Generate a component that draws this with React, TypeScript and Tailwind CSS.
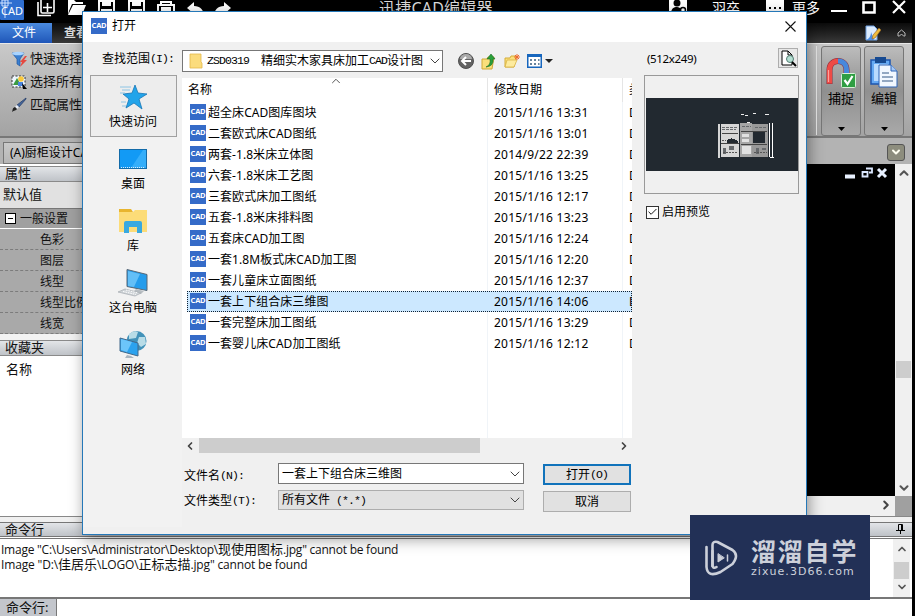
import type { ReactNode } from 'react'
import { Check, ChevronDown, ChevronLeft, ChevronRight, ChevronUp } from 'lucide-react'

const files = [
  ['超全床CAD图库图块', '2015/1/16 13:31'],
  ['二套欧式床CAD图纸', '2015/1/16 13:01'],
  ['两套-1.8米床立体图', '2014/9/22 22:39'],
  ['六套-1.8米床工艺图', '2015/1/16 13:25'],
  ['三套欧式床加工图纸', '2015/1/16 12:17'],
  ['五套-1.8米床排料图', '2015/1/16 13:23'],
  ['五套床CAD加工图', '2015/1/16 12:24'],
  ['一套1.8M板式床CAD加工图', '2015/1/16 12:20'],
  ['一套儿童床立面图纸', '2015/1/16 12:37'],
  ['一套上下组合床三维图', '2015/1/16 14:06'],
  ['一套完整床加工图纸', '2015/1/16 13:29'],
  ['一套婴儿床CAD加工图纸', '2015/1/16 12:12'],
]

const properties = ['色彩', '图层', '线型', '线型比例', '线宽']

const Mono = ({ children }: { children: ReactNode }) => (
  <span className="whitespace-pre font-['Liberation_Mono'] text-[11.5px] tracking-[-0.9px]">
    {children}
  </span>
)

const CadBadge = () => (
  <span className="flex size-4 shrink-0 items-center justify-center bg-[#356bc8] font-['Open_Sans'] text-[7.5px] leading-none font-bold tracking-[-0.2px] text-white">
    CAD
  </span>
)

const SaveIcon = () => (
  <svg width="17" height="20" viewBox="0 0 17 20" fill="none" stroke="#fff" strokeWidth="2">
    <path d="M1 1h15v16H1z" />
    <path d="M5 1v4h7V1M4 17v-7h9v7" />
    <path d="M6 3h5" />
  </svg>
)

const TitleBar = () => (
  <div className="flex h-[23px] shrink-0 items-start overflow-hidden bg-black text-white">
    <svg width="24" height="20" viewBox="0 0 24 20">
      <rect width="24" height="20" rx="1" fill="#2f6fd0" />
      <path d="M5 0v18M0 3h12M2 0h6v6H2z" stroke="#cfe2ff" fill="none" />
      <text x="1" y="15" fontSize="11" fill="#fff" fontFamily="Noto Sans" textLength="22">
        CAD
      </text>
    </svg>
    <svg className="ml-[13px]" width="18" height="17" viewBox="0 0 18 17" fill="none" stroke="#fff">
      <rect x="4" y="-2" width="13" height="15" rx="1.500" fill="#000" strokeWidth="1.600" />
      <path d="M1 2v13.500h13" strokeWidth="1.600" />
      <path d="M10.500 3v9M6 7.500h9" strokeWidth="1.600" />
    </svg>
    <svg className="ml-[12px]" width="19" height="17" viewBox="0 0 19 17">
      <path d="M1 15V0h6l2 2h7v2H5L2 11z" fill="#fff" />
      <path d="M6 5h13l-4 10H1z" fill="#fff" />
    </svg>
    <div className="ml-[12px] flex">
      <SaveIcon />
    </div>
    <div className="ml-[13px] flex">
      <SaveIcon />
    </div>
    <svg className="ml-[12px]" width="18" height="17" viewBox="0 0 18 17" fill="none" stroke="#fff" strokeWidth="2">
      <path d="M4 5V2h10v3M1 14V5h16v9" />
      <path d="M5 15V8h8v7M6 10h6" />
    </svg>
    <svg className="ml-[12px]" width="17" height="17" viewBox="0 0 17 17" fill="#fff">
      <path d="M0 8l7-6v4c6 0 10 4 10 10-2-4-5-5-10-5v3z" />
    </svg>
    <svg className="ml-[10px]" width="17" height="17" viewBox="0 0 17 17" fill="#fff">
      <path d="M17 8l-7-6v4C4 6 0 10 0 16c2-4 5-5 10-5v3z" />
    </svg>
    <span className="mt-[-1px] ml-[148px] w-[115px] text-[16px] leading-[18px] tracking-[0.2px] whitespace-nowrap text-[#ddd]">
      迅捷CAD编辑器
    </span>
    <svg className="ml-[175px]" width="18" height="15" viewBox="0 0 18 15">
      <rect width="18" height="15" fill="#fff" />
      <circle cx="8" cy="3" r="3.5" />
      <path d="M2 14c0-6 3-7 6-7 2 0 3 1 4 2l-1 5z" />
      <circle cx="14" cy="10" r="2.5" fill="#fff" stroke="#000" strokeWidth="1.5" />
    </svg>
    <span className="ml-[25px] text-[14px] leading-[16px]">羽卒</span>
    <svg className="ml-[26px]" width="18" height="15" viewBox="0 0 18 15">
      <rect width="18" height="15" fill="#fff" />
      <path d="M3 7h2v2H3zM8 7h2v2H8zM13 7h2v2h-2z" />
    </svg>
    <span className="ml-[8px] text-[14px] leading-[16px]">更多</span>
    <svg className="ml-[11px]" width="76" height="16" viewBox="0 0 76 16" fill="none" stroke="#fff">
      <path d="M0 11h16" strokeWidth="2" />
      <path d="M32.5 2.5h11v10h-11z" strokeWidth="2.600" />
      <path d="M62 1l12 12M74 1L62 13" strokeWidth="2.2" />
    </svg>
  </div>
)

const MenuTabs = () => (
  <div className="flex h-5 shrink-0 items-center justify-between bg-gradient-to-b from-[#0b0b0b] to-[#3a3a3a] pr-[6px]">
    <div className="flex h-full items-center text-[12px] leading-none text-white">
      <div className="flex h-full w-[52px] items-center justify-center bg-gradient-to-b from-[#4b8be0] to-[#1f56b8] pr-1">
        文件
      </div>
      <span className="ml-[12px] font-bold text-[#ddd]">查看</span>
    </div>
    <div className="flex items-center">
      <svg width="16" height="16" viewBox="0 0 16 16">
        <path d="M1 1h8l3 3v11H1z" fill="#dcecff" stroke="#6f9fe0" />
        <path d="M1 15c3-1 5-4 5-8l3 8z" fill="#4c8fe6" />
        <path d="M7 14l1-4 6-7 2 2-6 8z" fill="#f0bc3c" stroke="#8d5c21" strokeWidth=".6" />
      </svg>
      <svg className="ml-[16px]" width="9" height="8" viewBox="0 0 9 8" fill="none" stroke="#bbb">
        <path d="M1 4l3.500-3L8 4v3H6.500L4.500 5 2.500 7H1z" />
      </svg>
    </div>
  </div>
)

const RibbonButton = ({ label, children }: { label: string; children: ReactNode }) => (
  <div className="flex h-[90px] w-[40px] flex-col items-center rounded-[3px] border border-[#777] bg-gradient-to-b from-[#bcbcbc] via-[#909090] to-[#a9a9a9] pt-[9px]">
    <div className="h-[33px]">{children}</div>
    <span className="text-[13px] leading-[18px] text-black">{label}</span>
    <svg className="mt-[20px]" width="7" height="4" viewBox="0 0 7 4">
      <path d="M0 0h7L3.500 4z" />
    </svg>
  </div>
)

const Ribbon = () => (
  <div className="flex h-[93px] shrink-0 justify-between border-t border-[#e8e8e8] bg-gradient-to-b from-[#c9c9c9] to-[#a3a3a3] pr-2">
    <div className="flex flex-col pt-[3px] pl-[11px] text-[13px] text-[#111]">
      <div className="flex h-[23px] items-center gap-[3px]">
        <svg width="16" height="16" viewBox="0 0 16 16">
          <path d="M1 2h12L9 8v7l-3-2V8z" fill="#3a7fd0" stroke="#23589e" strokeWidth=".7" />
          <ellipse cx="7" cy="2.500" rx="6" ry="1.700" fill="#a9d4ff" />
          <path d="M14 5l-5 6h2l-2 5 7-7h-3l3-4z" fill="#e5483f" />
        </svg>
        快速选择
      </div>
      <div className="flex h-[23px] items-center gap-[3px]">
        <svg width="16" height="16" viewBox="0 0 16 16">
          <path d="M1 2h13v11H1z" fill="#eef6ff" stroke="#333" strokeDasharray="2 1.500" />
          <circle cx="10" cy="5" r="2.800" fill="#fac83c" />
          <path d="M2 11l4-7 4 7z" fill="#3b9a42" />
          <path d="M7 8h5v4H7z" fill="#4b85df" />
          <path d="M11 9l5 6h-4z" />
        </svg>
        选择所有
      </div>
      <div className="flex h-[23px] items-center gap-[3px]">
        <svg width="16" height="16" viewBox="0 0 16 16">
          <path d="M15 1L6 8l2 2 7-8z" fill="#44669c" stroke="#223a63" strokeWidth=".7" />
          <path d="M6 8l2 2-2 2-2-2z" fill="#e8eef8" />
          <path d="M4 10l2 2c-1 2-3 1-5 3 1-2 0-4 3-5z" fill="#222" />
        </svg>
        匹配属性
      </div>
    </div>
    <div className="flex gap-[3px] pt-[2px]">
      <div className="mr-[1px] h-[89px] w-px bg-[#e8e8e8]" />
      <RibbonButton label="捕捉">
        <svg width="32" height="33" viewBox="0 0 32 33" fill="none">
          <path d="M4.500 28V14c0-12 17-12 17 0v6" stroke="#8a2c3c" strokeWidth="6" />
          <path d="M4.500 27.500V14c0-6 4-9 8.500-9" stroke="#ee4a45" strokeWidth="5" />
          <path d="M13 5c5 0 8.500 3 8.500 9v5" stroke="#4888dc" strokeWidth="5" />
          <path d="M3.500 26V14" stroke="#ffa19c" strokeWidth="1.200" />
          <rect x="16.500" y="17.500" width="14" height="14" rx="1" fill="#2f9e43" stroke="#d7f0d8" />
          <path d="M19.500 24l3 4 5-8" stroke="#fff" strokeWidth="2.200" />
        </svg>
      </RibbonButton>
      <RibbonButton label="编辑">
        <svg width="30" height="33" viewBox="0 0 30 33">
          <path d="M2 4h19v24H2z" fill="#65a9f3" stroke="#1c55ae" strokeWidth="1.500" />
          <path d="M6 1h11v6H6z" fill="#174a91" />
          <path d="M5 8h14v17H5z" fill="#b9dafe" />
          <path d="M10 9h12l6 6v16H10z" fill="#f1f7ff" stroke="#2f65b6" />
          <path d="M22 9v6h6" fill="#a7c9f5" stroke="#2f65b6" />
          <path d="M13 17h7M13 21h11M13 25h11" stroke="#738dae" strokeWidth="1.700" />
        </svg>
      </RibbonButton>
    </div>
  </div>
)

const DocumentTabs = () => (
  <div className="flex h-[28px] shrink-0 items-center justify-between border-t-2 border-[#777] bg-[#b3b3b3] pr-[7px] pl-[3px]">
    <div className="mt-[4px] flex h-[22px] w-[170px] items-center border border-[#777] bg-gradient-to-b from-[#c9c9c9] to-[#b6b6b6] pl-[6px] text-[12px]">
      (A)厨柜设计CAD
    </div>
    <div className="mt-[2px] flex h-[17px] w-[18px] items-center justify-center rounded-[3px] border border-[#555] bg-[#8d8d7d]">
      <ChevronDown className="size-3 text-[#fffff0]" strokeWidth={4} />
    </div>
  </div>
)

const PanelTitle = ({ children }: { children: ReactNode }) => (
  <div className="flex h-4 items-center border-y border-[#8a8a8a] bg-gradient-to-b from-[#e3e5e8] to-[#bfc3c8] pb-px pl-[5px] text-[13px] leading-none">
    {children}
  </div>
)

const PropertiesPanel = () => (
  <div className="flex w-[200px] flex-col bg-white pt-[2px] text-[#111]">
    <PanelTitle>属性</PanelTitle>
    <div className="flex h-[26px] items-center bg-[#e1e1e1] pb-px pl-[3px] text-[13px]">默认值</div>
    <div className="flex h-[21px] items-center gap-[4px] border-t border-b border-t-[#777] border-b-white bg-[#a0a0a0] pl-[5px] text-[12px]">
      <span className="flex size-[11px] items-center justify-center border border-black bg-white">
        <span className="h-px w-[5px] bg-black" />
      </span>
      一般设置
    </div>
    {properties.map((name) => (
      <div
        key={name}
        className="flex h-[21px] items-center border-b border-dashed border-[#7c7c7c] bg-[#a9a9a9] pt-px pl-[40px] text-[12px]"
      >
        {name}
      </div>
    ))}
    <div className="h-[6px] bg-[#f2f2f2]" />
    <PanelTitle>收藏夹</PanelTitle>
    <div className="pt-[4px] pl-[6px] text-[13px]">名称</div>
  </div>
)

const Canvas = () => (
  <div className="flex flex-1">
    <div className="flex flex-1 flex-col">
      <div className="flex flex-1 items-start justify-end bg-black pt-[3px] pr-[7px]">
        <svg width="43" height="12" viewBox="0 0 43 12">
          <path d="M0 7.500h10v4H0z" fill="#e8f1ff" />
          <path d="M21 1.500h6v4h-3M17.500 5h5v4.500h-5z" fill="none" stroke="#dce8ff" strokeWidth="1.800" />
          <path d="M33 2l8 8M41 2l-8 8" stroke="#e8f1ff" strokeWidth="3" />
        </svg>
      </div>
      <div className="flex h-[20px] items-center justify-end bg-[#f0f0f0] pr-[2px] pb-[3px]">
        <ChevronRight className="size-3.5 text-[#444]" strokeWidth={3.5} />
      </div>
    </div>
    <div className="flex w-[17px] flex-col">
      <div className="flex flex-1 flex-col items-center justify-between bg-[#f0f0f0] pt-[2px] pb-px">
        <ChevronUp className="size-3.5 text-[#555]" strokeWidth={3.5} />
        <div className="mt-[78px] h-[17px] w-[15px] bg-[#cdcdcd]" />
        <ChevronDown className="size-3.5 text-[#555]" strokeWidth={3.5} />
      </div>
      <div className="h-[20px] bg-[#a0a0a0]" />
    </div>
  </div>
)

const CommandLine = () => (
  <div className="flex h-[100px] shrink-0 flex-col bg-white text-[#111]">
    <div className="h-[6px] border-t border-[#888] bg-[#f0f0f0]" />
    <div className="flex h-[15px] shrink-0 items-center justify-between border-y border-[#777] bg-gradient-to-b from-[#e3e5e8] to-[#bfc3c8] pr-[7px] pb-px pl-[5px] text-[13px] leading-none">
      命令行
      <svg width="9" height="10" viewBox="0 0 9 10" fill="none" stroke="#000">
        <path d="M2.500 6V.5h4V6M5.500 1v5M0 6.500h9M4.500 7v3" />
      </svg>
    </div>
    <div className="mt-px flex flex-1 border-t border-[#777]">
      <div className="flex-1 pt-[3px] pl-px font-['Open_Sans','Noto_Sans_CJK_SC',sans-serif] text-[12px] leading-[15px] tracking-[-0.24px] whitespace-nowrap">
        <p className="h-[15px]">
          Image "C:\Users\Administrator\Desktop\
          <span className="text-[13px] leading-none tracking-normal">现使用图标</span>.jpg" cannot be
          found
        </p>
        <p className="h-[15px] tracking-[-0.16px]">
          Image "D:\<span className="text-[13px] leading-none tracking-normal">佳居乐</span>\LOGO\
          <span className="text-[13px] leading-none tracking-normal">正标志描</span>.jpg" cannot be
          found
        </p>
      </div>
      <div className="mr-[2px] flex w-[17px] flex-col items-center justify-between bg-[#f0f0f0] py-[4px]">
        <ChevronUp className="size-3 text-[#555]" strokeWidth={3.5} />
        <div className="mt-[4px] h-[17px] w-[15px] bg-[#cdcdcd]" />
        <ChevronDown className="size-3 text-[#555]" strokeWidth={3.5} />
      </div>
    </div>
    <div className="flex h-[19px] shrink-0 border-t-2 border-[#777]">
      <div className="flex w-[57px] items-center border-r border-[#777] bg-[#c3c6cc] pl-[6px] text-[13px]">
        命令行:
      </div>
    </div>
  </div>
)

const StarIcon = () => (
  <svg width="28" height="26" viewBox="0 0 28 26">
    <path d="M16 1l3 8 9 1-8 5 3 10-8-6-8 5 3-9-6-5 9-1z" fill="#22a4ea" stroke="#1676b6" strokeWidth=".8" />
    <path d="M1 3h11M3 6h8M1 9h5M2 18h5M3 22h4" stroke="#8cc4e4" />
  </svg>
)

const DesktopIcon = () => (
  <svg width="28" height="20" viewBox="0 0 28 20">
    <rect x=".5" y=".5" width="27" height="19" fill="#129af5" stroke="#136ba9" />
    <path d="M12 19L24 1h3v18z" fill="#35aefa" />
    <path d="M2 18.500h24" stroke="#d5eeff" strokeDasharray="1 1" />
  </svg>
)

const LibraryIcon = () => (
  <svg width="28" height="26" viewBox="0 0 28 26">
    <path d="M0 1h12l2 3H0z" fill="#e8b52f" />
    <path d="M0 4h14l2-2h12v22H0z" fill="#fcdc78" />
    <path d="M5 25V15q0-2 2-2h14q2 0 2 2v10h-5v-6h-8v6z" fill="#38a9e0" />
  </svg>
)

const ComputerIcon = () => (
  <svg width="30" height="28" viewBox="0 0 30 28">
    <path d="M9 .5l20 5v16l-20-4z" fill="#249cec" stroke="#586775" />
    <path d="M10 2l12 3-6 13-6-1z" fill="#63bff7" />
    <path d="M18 20l8 2-3 3-8-2z" fill="#b7bdc2" />
    <path d="M7 20l16 4-6 3-17-4z" fill="#cfd4d8" stroke="#a5abb0" strokeWidth=".7" />
    <path d="M5 22.500l13 3M8 21l12 3" stroke="#fff" strokeDasharray="1.500 1" />
  </svg>
)

const NetworkIcon = () => (
  <svg width="28" height="28" viewBox="0 0 28 28">
    <circle cx="17.500" cy="10" r="10" fill="#4292b9" />
    <path d="M10 3q5-4 9-2l-2 6-7 1zM20 6l6 0 1 7-5 3-4-4z" fill="#b8dce7" />
    <path d="M1 7l18 5v13L1 20z" fill="#2ba2ee" stroke="#43698a" />
    <path d="M2 8l11 3-5 10-6-2z" fill="#6cc5fa" />
    <path d="M8 24l4 1 3 2H6z" fill="#a9b5bf" />
  </svg>
)

const places = [
  { label: '快速访问', icon: <StarIcon /> },
  { label: '桌面', icon: <DesktopIcon /> },
  { label: '库', icon: <LibraryIcon /> },
  { label: '这台电脑', icon: <ComputerIcon /> },
  { label: '网络', icon: <NetworkIcon /> },
]

const PlacesBar = () => (
  <div className="flex h-[452px] w-[99px] flex-col items-center bg-[#f2f2f2]">
    {places.map(({ label, icon }, i) => (
      <div
        key={label}
        className={
          i === 0
            ? 'mr-[-2px] flex h-[62px] w-[87px] flex-col items-center border border-[#a0a0a0] bg-[#ededed] pt-[7px]'
            : 'mr-[-2px] flex h-[62px] w-[87px] flex-col items-center pt-[8px]'
        }
      >
        <div className="-ml-px flex h-[28px] items-center">{icon}</div>
        <span className="mt-[3px] -ml-px text-[12px] leading-[16px]">{label}</span>
      </div>
    ))}
  </div>
)

const LookInRow = () => (
  <div className="flex h-[33px] items-start pt-[8px] pl-[19px]">
    <div className="flex h-[18px] w-[80px] items-center whitespace-nowrap">
      查找范围<Mono>(I):</Mono>
    </div>
    <div className="flex h-[22px] w-[261px] items-center border border-[#777] bg-white pl-[6px] whitespace-nowrap">
      <svg className="mr-[4px]" width="14" height="16" viewBox="0 0 14 16">
        <path d="M1 1h11v8l1 1v5H1z" fill="#fbdc7d" stroke="#e4b84a" strokeWidth=".8" />
      </svg>
      <Mono>{'ZSD0319  '}</Mono>精细实木家具床加工<Mono>CAD</Mono>设计图
      <ChevronDown className="-mr-px ml-auto size-4 shrink-0 text-[#444]" strokeWidth={1.5} />
    </div>
    <div className="flex h-[22px] items-center pl-[15px]">
      <svg width="16" height="16" viewBox="0 0 16 16">
        <circle cx="8" cy="8" r="7.500" fill="#636363" stroke="#505050" />
        <path d="M2 6a6 5 0 0 1 12 0z" fill="#aaa" />
        <path d="M8 4L4 8l4 4M4.500 8H13" fill="none" stroke="#fff" strokeWidth="2" />
      </svg>
      <svg className="ml-[7px]" width="15" height="17" viewBox="0 0 15 17">
        <path d="M1 6h5l1-2h6l-2 12H1z" fill="#f9df7b" stroke="#cfa936" />
        <path d="M5 14q5-2 4-8H6l4-5 4 5h-2q1 7-7 8z" fill="#29a03b" stroke="#176c24" strokeWidth=".6" />
      </svg>
      <svg className="ml-[8px]" width="16" height="16" viewBox="0 0 16 16">
        <path d="M1 5h5l1-2h5v3l-2 8H1z" fill="#f9df7b" stroke="#d5ad39" />
        <path d="M3 7h10l-3 7H1z" fill="#fdeb9e" stroke="#d5ad39" strokeWidth=".7" />
        <path d="M13 1v6M10 4h6M11 2l4 4M15 2l-4 4" stroke="#ee6b2e" />
      </svg>
      <svg className="ml-[7px]" width="26" height="14" viewBox="0 0 26 14">
        <path d="M.75.75h13.500v12.500H.75z" fill="#fff" stroke="#1766bd" strokeWidth="1.500" />
        <path d="M0 0h15v3H0z" fill="#1766bd" />
        <path d="M3 5h2v2H3zM7 5h2v2H7zM11 5h1.500v2H11zM3 9h2v2H3zM7 9h2v2H7zM11 9h1.500v2H11z" fill="#67839d" />
        <path d="M18 5h8l-4 4z" fill="#222" />
      </svg>
    </div>
  </div>
)

const FileList = () => (
  <div className="flex h-[360px] flex-col overflow-hidden bg-white">
    <div className="flex h-6 shrink-0 items-center">
      <div className="flex h-full w-[305px] items-start justify-between pl-[6px]">
        <span className="pt-[3px]">名称</span>
        <ChevronUp className="mt-[-4px] mr-[144px] size-[14px] text-[#555]" strokeWidth={1.7} />
      </div>
      <div className="flex h-full w-[135px] items-center border-l border-[#e5e5e5] pl-[6px]">修改日期</div>
      <div className="flex h-full w-[10px] items-center overflow-hidden border-l border-[#e5e5e5] pl-[6px]">
        类
      </div>
    </div>
    {files.map(([name, date], i) => (
      <div key={name} className="flex h-[21px] shrink-0 pl-[5px]">
        <div
          className={
            i === 9
              ? 'flex w-[445px] items-center overflow-hidden bg-[#cce8ff] pl-[3px] outline-1 outline-offset-[-1px] outline-dotted outline-[#123]'
              : 'flex w-[445px] items-center overflow-hidden pl-[3px]'
          }
        >
          <div className="flex w-[297px] shrink-0 items-center gap-[2px] pb-px tracking-[0.05px] whitespace-nowrap">
            <CadBadge />
            <span className="pt-px">{name}</span>
          </div>
          <div
            className={
              i === 9
                ? 'flex h-full w-[135px] shrink-0 items-center pl-[7px] whitespace-nowrap'
                : 'flex h-full w-[135px] shrink-0 items-center border-l border-[#f0f4f8] pl-[6px] whitespace-nowrap'
            }
          >
            <span className="font-['Noto_Sans'] tracking-[0.25px]">{date}</span>
          </div>
          <div
            className={
              i === 9
                ? 'flex h-full shrink-0 items-center pl-[7px]'
                : 'flex h-full shrink-0 items-center border-l border-[#f0f4f8] pl-[6px]'
            }
          >
            D
          </div>
        </div>
      </div>
    ))}
    <div className="flex flex-1 pl-[305px]">
      <div className="w-[136px] border-x border-[#f0f4f8]" />
    </div>
  </div>
)

const FileFields = () => (
  <div className="flex pt-[10px]">
    <div className="flex w-[96px] flex-col pl-[2px]">
      <div className="flex h-[25px] items-center">
        文件名<Mono>(N):</Mono>
      </div>
      <div className="flex h-[25px] items-center">
        文件类型<Mono>(T):</Mono>
      </div>
    </div>
    <div className="flex w-[246px] flex-col gap-[6px]">
      <div className="flex h-[21px] items-center justify-between border border-[#777] bg-white pl-[3px]">
        一套上下组合床三维图
        <ChevronDown className="size-4 text-[#444]" strokeWidth={1.5} />
      </div>
      <div className="flex h-5 items-center justify-between border border-[#adadad] bg-[#e1e1e1] pl-[3px]">
        <span>
          所有文件<Mono> (*.*)</Mono>
        </span>
        <ChevronDown className="size-4 text-[#444]" strokeWidth={1.5} />
      </div>
    </div>
    <div className="ml-[19px] flex w-[88px] flex-col gap-[6px] pt-px">
      <button className="flex h-[21px] items-center justify-center border-2 border-[#1173bb] bg-[#e1e1e1]">
        打开<Mono>(O)</Mono>
      </button>
      <button className="flex h-[21px] items-center justify-center border border-[#adadad] bg-[#e1e1e1]">
        取消
      </button>
    </div>
  </div>
)

const PreviewImage = () => (
  <svg className="mt-[22px] ml-px" width="152" height="73" viewBox="0 0 152 73" shapeRendering="crispEdges">
    <rect width="152" height="73" fill="#222930" />
    <path d="M72 26h2v34h-2zM75 26h18v33H75z" fill="#d6d6d6" />
    <path d="M94 25h12v34H94z" fill="#a6a6a6" />
    <path d="M106 26h16v33h-16z" fill="#999" />
    <path d="M76 29.500h15M76 31.500h14M96 28.500h9M109 29.500h11" stroke="#66696c" strokeDasharray="3 1" />
    <path d="M76 35.500h16M75 45.500h18M95 33.500h26M95 46.500h26" stroke="#444" />
    <path d="M81 42q6-4 11 2v1H81zM107 34h12v11h-12z" fill="#222930" />
    <path d="M96 36h7v3h-7zM96 41h7v3h-7zM96 48h9v8h-9z" fill="#e1e1e1" />
    <path d="M77 50h3v6h-3zM83 48h5v4h-5zM110 50h3v6h-3zM116 50h4v2h-4z" fill="#66696c" />
    <path d="M76 42.500h4M77 54.500h14M108 54.500h13" stroke="#555" strokeDasharray="2 1" />
    <path d="M123.500 25v34M124 59.500h4M126.500 25v35" stroke="#fff" />
    <path d="M95 16.500h3M99 17.500h3M107 15.500h3M119 16.500h4M101 24.500h3" stroke="#eee" />
  </svg>
)

const Preview = () => (
  <div className="flex w-[154px] flex-col">
    <div className="flex h-[33px] items-start justify-between pt-[6px]">
      <span className="pt-[2px] pl-[3px] font-['Noto_Sans'] text-[11.5px] leading-[18px] tracking-[-0.35px]">
        (512x249)
      </span>
      <div className="flex size-5 items-center justify-center border border-[#adadad] bg-[#e8e8e8]">
        <svg width="17" height="17" viewBox="0 0 17 17">
          <path d="M2 1h6l4 4v10H2z" fill="#fff" stroke="#000" />
          <path d="M8 1v4h4" fill="none" stroke="#000" />
          <circle cx="10" cy="9" r="3.500" fill="#b5dfd2" stroke="#527b72" />
          <path d="M12 12l4 4" stroke="#000" strokeWidth="2" />
        </svg>
      </div>
    </div>
    <div className="h-[119px] w-[155px] border border-[#999]">
      <PreviewImage />
    </div>
    <label className="mt-[9px] flex items-center gap-[3px] pl-[2px]">
      <span className="flex size-[13px] items-center justify-center border border-[#333] bg-white">
        <Check className="size-[12px] text-black" strokeWidth={2} />
      </span>
      启用预览
    </label>
  </div>
)

const OpenDialog = () => (
  <div className="absolute top-[11px] left-[82px] flex h-[524px] w-[725px] flex-col border border-[#2578b8] bg-[#f0f0f0] text-[12px] text-black shadow-[2px_4px_14px_rgba(0,0,0,0.4)]">
    <div className="flex h-[30px] shrink-0 items-center justify-between bg-white pr-[10px] pb-[2px] pl-[8px]">
      <div className="flex items-center gap-[5px]">
        <CadBadge />
        打开
      </div>
      <svg width="11" height="11" viewBox="0 0 11 11" stroke="#111" strokeWidth="1.100">
        <path d="M.5.5l10 10M10.500.5l-10 10" />
      </svg>
    </div>
    <div className="flex flex-1">
      <div className="flex w-[549px] flex-col">
        <LookInRow />
        <div className="flex">
          <PlacesBar />
          <div className="flex w-[450px] flex-col pt-[3px]">
            <FileList />
            <div className="flex h-[15px] items-center justify-between">
              <ChevronLeft className="ml-[2px] size-3 text-[#444]" strokeWidth={3.5} />
              <div className="mr-auto ml-[3px] h-full w-[281px] bg-[#cdcdcd]" />
              <ChevronRight className="mr-[2px] size-3 text-[#444]" strokeWidth={3.5} />
            </div>
            <FileFields />
          </div>
        </div>
      </div>
      <div className="pl-[12px]">
        <Preview />
      </div>
    </div>
  </div>
)

const Watermark = () => (
  <div className="absolute top-[515px] left-[690px] flex h-[85px] w-[180px] items-center bg-[#223056] pl-[15px] text-[#ccd0da]">
    <svg width="34" height="36" viewBox="0 0 34 36" fill="none" stroke="currentColor" strokeLinejoin="round" strokeLinecap="round">
      <path d="M7.500 26V5q0-4 5-3l15 8q7 5 0 14l-12 8q-13 6-14-5V7" strokeWidth="2.600" />
      <path d="M7.500 11v15q1 3 4 1" strokeWidth="2.600" />
      <path d="M22.500 15v6" strokeWidth="1.500" />
      <path d="M13 14v8l6-4z" fill="currentColor" strokeWidth="1" />
    </svg>
    <div className="ml-[12px] flex flex-col">
      <span className="text-[25px] leading-[24px] font-bold tracking-[1.800px] whitespace-nowrap">
        溜溜自学
      </span>
      <span className="mt-[3px] font-['DejaVu_Sans'] text-[11px] leading-[11px] tracking-[1.050px] whitespace-nowrap">
        zixue.3D66.com
      </span>
    </div>
  </div>
)

export default function App() {
  return (
    <div className="relative h-[616px] w-[921px] overflow-hidden bg-white font-['Noto_Sans','Noto_Sans_CJK_SC',sans-serif]">
      <div className="flex h-full w-[915px] flex-col border-r-[3px] border-black">
        <TitleBar />
        <MenuTabs />
        <Ribbon />
        <DocumentTabs />
        <div className="flex flex-1">
          <PropertiesPanel />
          <Canvas />
        </div>
        <CommandLine />
      </div>
      <OpenDialog />
      <Watermark />
    </div>
  )
}
